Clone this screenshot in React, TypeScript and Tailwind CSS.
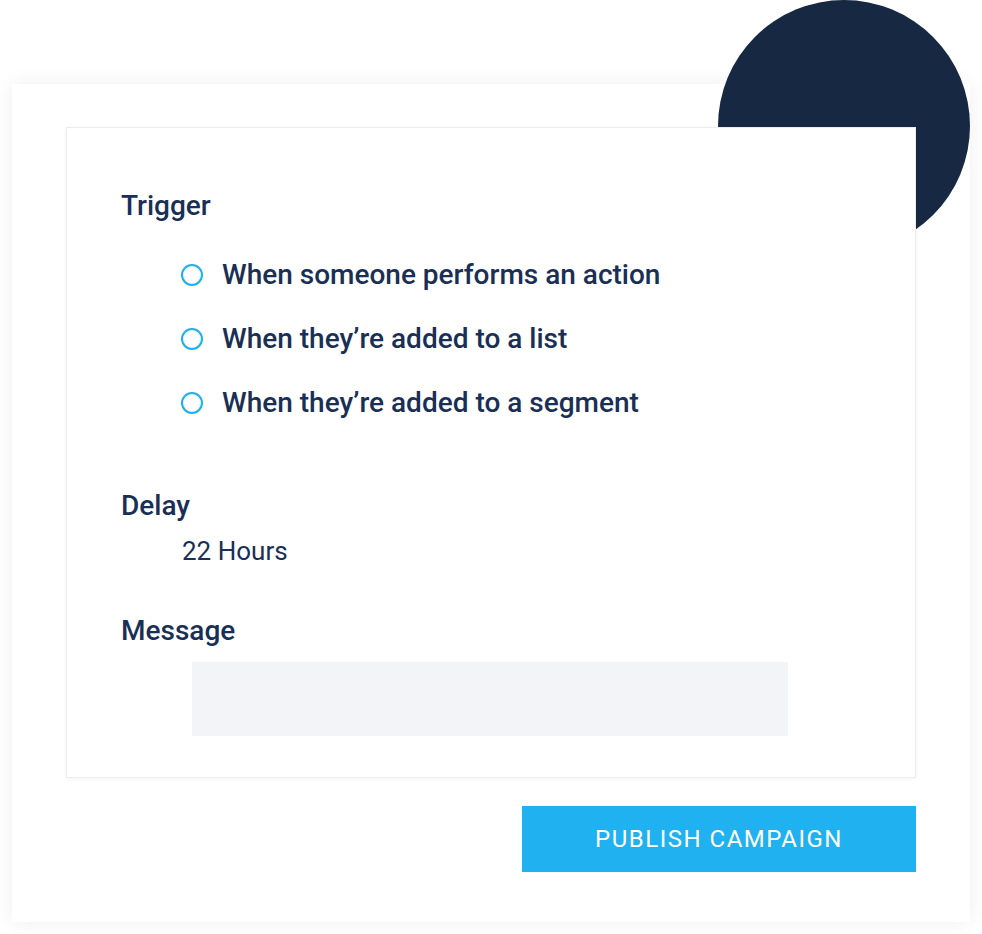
import React from "react";

const options = [
  "When someone performs an action",
  "When they\u2019re added to a list",
  "When they\u2019re added to a segment",
];

export default function App() {
  return (
    <div
      className="relative w-[982px] h-[934px] bg-white pt-[84px] pl-[12px]"
      style={{ fontFamily: "Roboto, 'Noto Sans', sans-serif" }}
    >
      <div className="absolute left-[718px] top-0 w-[252px] h-[252px] rounded-full bg-[#172842]" />
      <div className="w-[958px] h-[838px] bg-white shadow-[0_0_18px_rgba(0,0,0,0.07)] pt-[43px] pl-[54px] flex flex-col">
        <div className="relative z-10 w-[850px] h-[651px] bg-white border border-[#ececec] shadow-[0_1px_4px_rgba(0,0,0,0.05)] pt-[62px] pl-[54px] flex flex-col text-[#1a2f55]">
          <div className="text-[28px] leading-[32px] font-medium">Trigger</div>
          <div className="flex flex-col gap-[32px] mt-[37px] pl-[60px]">
            {options.map((o) => (
              <div key={o} className="flex items-center h-[32px]">
                <span className="w-[22px] h-[22px] rounded-full border-2 border-[#1cb0ec] shrink-0" />
                <span className="ml-[19px] text-[28px] leading-[32px] font-medium">{o}</span>
              </div>
            ))}
          </div>
          <div className="mt-[71px] text-[28px] leading-[32px] font-medium">Delay</div>
          <div className="mt-[13px] pl-[61px] text-[26px] leading-[32px] font-normal">22 Hours</div>
          <div className="mt-[48px] text-[28px] leading-[32px] font-medium">Message</div>
          <div className="mt-[15px] ml-[71px] w-[596px] h-[74px] bg-[#f3f4f8]" />
        </div>
        <div className="w-[850px] flex justify-end mt-[28px]">
          <button className="w-[394px] h-[66px] bg-[#1fb1f0] text-white text-[24px] tracking-[1.5px] font-normal">
            PUBLISH CAMPAIGN
          </button>
        </div>
      </div>
    </div>
  );
}
